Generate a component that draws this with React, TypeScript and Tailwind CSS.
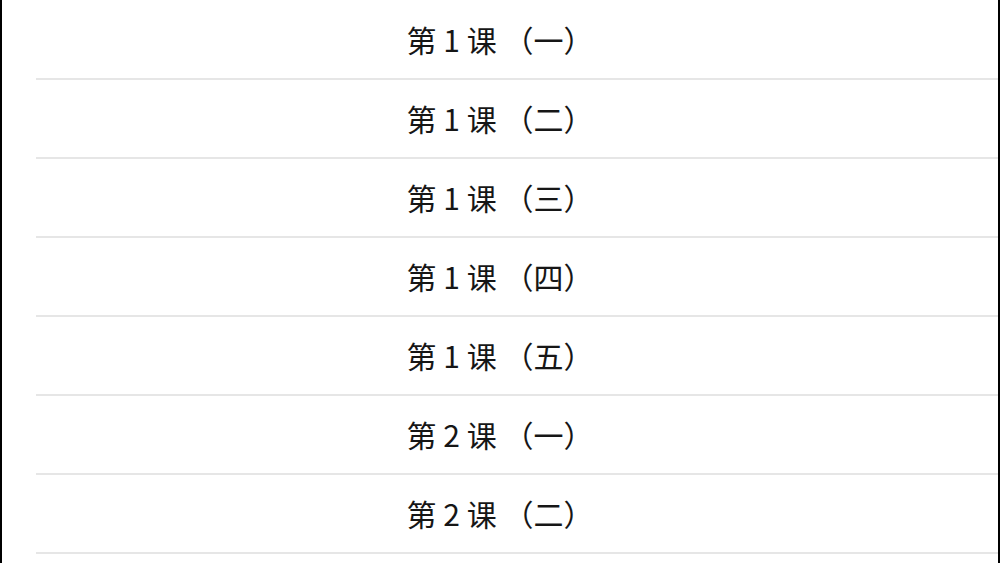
const lessons = [
  '第 1 课 （一）',
  '第 1 课 （二）',
  '第 1 课 （三）',
  '第 1 课 （四）',
  '第 1 课 （五）',
  '第 2 课 （一）',
  '第 2 课 （二）',
];

export default function App() {
  return (
    <div className="h-[563px] w-[1000px] overflow-hidden bg-white border-x-2 border-black font-['Noto_Sans_CJK_SC',sans-serif]">
      <ul className="flex flex-col pt-px">
        {lessons.map((title, i) => (
          <li key={i} className="pl-[34px]">
            <div className="flex h-[79px] items-center justify-center border-b-2 border-[#e6e6e6] pr-[34px] text-[30px] text-[#161616]">
              {title}
            </div>
          </li>
        ))}
      </ul>
    </div>
  );
}
